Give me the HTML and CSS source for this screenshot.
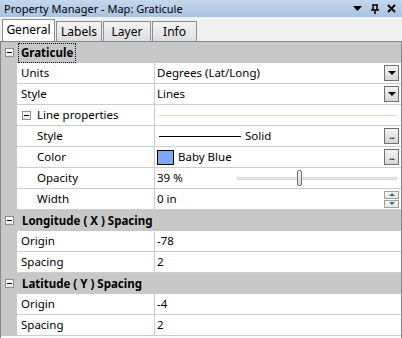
FILE: index.html
```html
<!DOCTYPE html>
<html lang="en">
<head>
    <meta charset="UTF-8">
    <title>Property Manager - Map: Graticule</title>
    <link rel="stylesheet" href="styles.css">
</head>
<body>
    <div class="panel">
        <div class="titlebar">
            <span class="title">Property Manager - Map: Graticule</span>
            <span class="tools">
                <svg width="10" height="6" viewBox="0 0 10 6"><path d="M0 0h9L4.5 5z" fill="#000"/></svg>
                <svg width="8" height="10" viewBox="0 0 8 10"><path d="M2 0v6M6 0v6M2 1h4M0 6h8M4 6v4" stroke="#000" stroke-width="1.5" fill="none"/></svg>
                <svg width="9" height="9" viewBox="0 0 9 9"><path d="M1 1l7 7M8 1l-7 7" stroke="#000" stroke-width="1.8"/></svg>
            </span>
        </div>

        <div class="tabs">
            <div class="tab active w-general">General</div>
            <div class="tab w-labels">Labels</div>
            <div class="tab w-layer">Layer</div>
            <div class="tab w-info">Info</div>
        </div>

        <div class="grid">
            <!-- Graticule -->
            <div class="row cat">
                <span class="gut"><span class="box"><span class="minus"></span></span></span>
                <span class="cat-label focus">Graticule</span>
            </div>
            <div class="row">
                <span class="gut"></span>
                <span class="name">Units</span>
                <span class="val">Degrees (Lat/Long)<span class="btn drop"><span class="tri"></span></span></span>
            </div>
            <div class="row">
                <span class="gut"></span>
                <span class="name">Style</span>
                <span class="val">Lines<span class="btn drop"><span class="tri"></span></span></span>
            </div>
            <div class="row">
                <span class="gut"></span>
                <span class="name sub-head"><span class="box"><span class="minus"></span></span>Line properties</span>
                <span class="val"><span class="faint-line"></span></span>
            </div>
            <div class="row">
                <span class="gut"></span>
                <span class="name sub">Style</span>
                <span class="val"><span class="line-sample"></span>Solid<span class="btn dots">...</span></span>
            </div>
            <div class="row">
                <span class="gut"></span>
                <span class="name sub">Color</span>
                <span class="val"><span class="swatch"></span>Baby Blue<span class="btn dots">...</span></span>
            </div>
            <div class="row">
                <span class="gut"></span>
                <span class="name sub">Opacity</span>
                <span class="val">39 %<span class="slider"><span class="track"></span><span class="thumb" style="left: 60px;"></span></span></span>
            </div>
            <div class="row">
                <span class="gut"></span>
                <span class="name sub">Width</span>
                <span class="val">0 in<span class="spin"><span class="spin-btn"><span class="up"></span></span><span class="spin-btn"><span class="down"></span></span></span></span>
            </div>

            <!-- Longitude -->
            <div class="row cat">
                <span class="gut"><span class="box"><span class="minus"></span></span></span>
                <span class="cat-label">Longitude ( X ) Spacing</span>
            </div>
            <div class="row">
                <span class="gut"></span>
                <span class="name">Origin</span>
                <span class="val">-78</span>
            </div>
            <div class="row">
                <span class="gut"></span>
                <span class="name">Spacing</span>
                <span class="val">2</span>
            </div>

            <!-- Latitude -->
            <div class="row cat">
                <span class="gut"><span class="box"><span class="minus"></span></span></span>
                <span class="cat-label">Latitude ( Y ) Spacing</span>
            </div>
            <div class="row">
                <span class="gut"></span>
                <span class="name">Origin</span>
                <span class="val">-4</span>
            </div>
            <div class="row">
                <span class="gut"></span>
                <span class="name">Spacing</span>
                <span class="val">2</span>
            </div>
        </div>
    </div>
</body>
</html>
```

FILE: styles.css
```css
body {
    margin: 0;
    font-family: "Noto Sans", "Open Sans", sans-serif;
    font-size: 11.5px;
    color: #000;
    background: #f0f0f0;
}
.panel {
    width: 402px;
    height: 338px;
    overflow: hidden;
    background: #f0f0f0;
}

/* title bar */
.titlebar {
    height: 17px;
    display: flex;
    align-items: center;
    justify-content: space-between;
    padding: 0 6px 0 4px;
    background: linear-gradient(#c4d7ec, #a9c3df);
}
.title {
    font-size: 11px;
    line-height: 17px;
}
.tools {
    display: flex;
    align-items: center;
    gap: 8px;
}

/* tabs */
.tabs {
    height: 24px;
    display: flex;
    align-items: flex-end;
    gap: 1px;
    padding-left: 2px;
    box-sizing: border-box;
}
.tab {
    height: 20px;
    box-sizing: border-box;
    border: 1px solid #898c95;
    border-bottom: none;
    background: linear-gradient(#f4f4f4, #dedede);
    text-align: center;
    font-size: 12px;
    line-height: 20px;
}
.tab.active {
    height: 22px;
    background: #fff;
    line-height: 20px;
}
.w-general { width: 53px; }
.w-labels { width: 46px; }
.w-layer { width: 48px; }
.w-info { width: 45px; }

/* property grid */
.grid {
    border-top: 1px solid #828790;
    border-left: 1px solid #828790;
    border-right: 1px solid #828790;
    background: #fff;
    height: 300px;
}
.row {
    display: flex;
    height: 21px;
    box-sizing: border-box;
}
.gut {
    width: 16px;
    flex: none;
    background: #c8c8c8;
    display: flex;
    align-items: center;
    justify-content: center;
}
.name {
    width: 138px;
    flex: none;
    padding-left: 4px;
    box-sizing: border-box;
    border-bottom: 1px solid #cdcdcd;
    border-right: 1px solid #cdcdcd;
    line-height: 20px;
    display: flex;
    align-items: center;
}
.name.sub {
    padding-left: 20px;
}
.name.sub-head {
    padding-left: 5px;
    gap: 6px;
}
.val {
    flex: 1;
    display: flex;
    align-items: center;
    padding-left: 2px;
    border-bottom: 1px solid #cdcdcd;
    line-height: 20px;
    position: relative;
}

/* category rows */
.row.cat {
    background: #c8c8c8;
}
.row.cat .gut {
    justify-content: flex-start;
    padding-left: 4px;
    box-sizing: border-box;
}
.cat-label {
    font-weight: bold;
    line-height: 18px;
    margin: 1px 0 0 4px;
    padding: 0 2px 0 0;
    height: 18px;
    border: 1px dotted transparent;
}
.cat-label.focus {
    border-color: #000;
    margin-left: 1px;
    padding-left: 2px;
}

/* expand box */
.box {
    width: 9px;
    height: 9px;
    box-sizing: border-box;
    border: 1px solid #8e8f8f;
    background: linear-gradient(#fff, #e6e6e6);
    display: flex;
    align-items: center;
    justify-content: center;
}
.minus {
    width: 5px;
    height: 1px;
    background: #000;
}

/* editors */
.btn {
    margin-left: auto;
    margin-right: 2px;
    width: 15px;
    height: 16px;
    box-sizing: border-box;
    border: 1px solid #707070;
    background: linear-gradient(#f3f3f3, #d6d6d6);
    display: flex;
    align-items: center;
    justify-content: center;
}
.tri {
    width: 0;
    height: 0;
    border-left: 4px solid transparent;
    border-right: 4px solid transparent;
    border-top: 4px solid #000;
}
.dots {
    font-size: 10px;
    line-height: 10px;
    align-items: flex-end;
    padding-bottom: 3px;
    letter-spacing: -1px;
}
.faint-line {
    flex: 1;
    height: 1px;
    background: #c4d8f0;
    margin: 0 4px 0 2px;
}
.line-sample {
    width: 82px;
    height: 1px;
    background: #000;
    margin: 0 4px 0 2px;
}
.swatch {
    width: 17px;
    height: 15px;
    box-sizing: border-box;
    border: 1px solid #000;
    background: #7fa7f4;
    margin-right: 4px;
}
.slider {
    margin-left: auto;
    margin-right: 4px;
    width: 160px;
    height: 16px;
    position: relative;
    display: flex;
    align-items: center;
}
.track {
    width: 100%;
    height: 3px;
    box-sizing: border-box;
    border: 1px solid #d6d6d6;
    background: #e7eaea;
}
.thumb {
    position: absolute;
    top: 0;
    width: 5px;
    height: 16px;
    box-sizing: border-box;
    border: 1px solid #707070;
    border-radius: 2px;
    background: linear-gradient(#f6f6f6, #dcdcdc);
}
.spin {
    margin-left: auto;
    margin-right: 2px;
    width: 15px;
    display: flex;
    flex-direction: column;
    gap: 1px;
}
.spin-btn {
    height: 8px;
    box-sizing: border-box;
    border: 1px solid #a0a0a0;
    background: linear-gradient(#fafafa, #e4e4e4);
    display: flex;
    align-items: center;
    justify-content: center;
}
.up {
    border-left: 3px solid transparent;
    border-right: 3px solid transparent;
    border-bottom: 3px solid #4a5f8a;
}
.down {
    border-left: 3px solid transparent;
    border-right: 3px solid transparent;
    border-top: 3px solid #4a5f8a;
}
```
